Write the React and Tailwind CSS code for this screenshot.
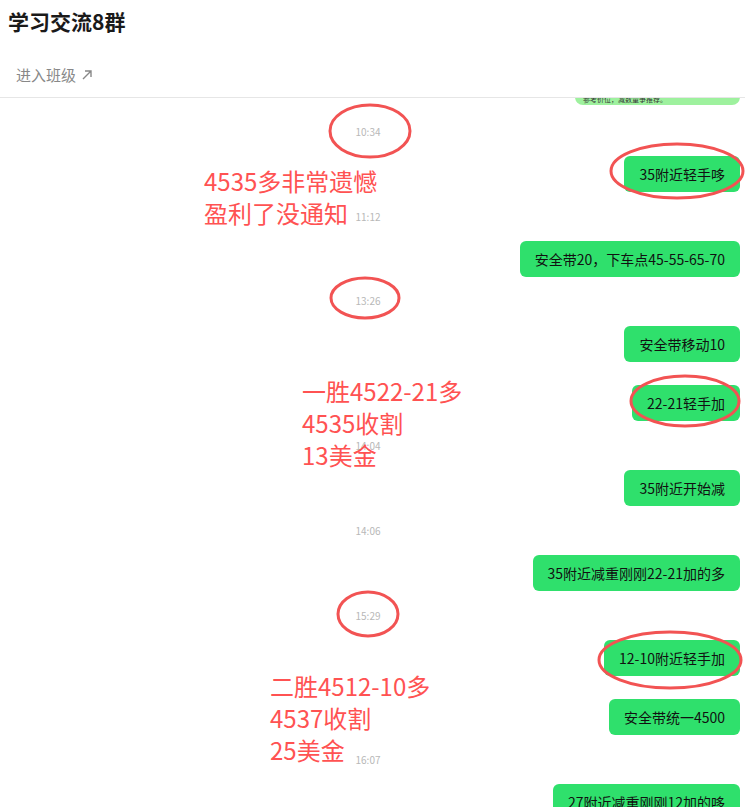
import React from 'react';

const font = { fontFamily: '"Noto Sans CJK SC", "Noto Sans", sans-serif' };

const Bubble = ({ children, className = '' }) => (
  <div className={`flex justify-end pr-[5px] ${className}`}>
    <div className="h-9 rounded-md bg-[#2fe06c] px-[15px] flex items-center text-[14px] text-[#111] whitespace-nowrap">
      {children}
    </div>
  </div>
);

const Time = ({ children, className = '' }) => (
  <div className={`h-[14px] flex items-center justify-center pr-[9px] text-[10px] text-[#b8b8b8] ${className}`}>
    {children}
  </div>
);

const Note = ({ lines, className }) => (
  <div className={`absolute text-[24px] text-[#ff5252] ${className}`}>
    {lines.map((l) => (
      <div key={l} className="h-8 flex items-center whitespace-nowrap">{l}</div>
    ))}
  </div>
);

const App = () => {
  return (
    <div className="relative w-[745px] h-[807px] overflow-hidden bg-white flex flex-col" style={font}>
      <header className="h-[98px] shrink-0 border-b border-[#e6e6e6] flex flex-col">
        <h1 className="h-[44px] pl-2 flex items-center text-[21px] font-bold text-[#1a1a1a]">学习交流8群</h1>
        <div className="mt-[20px] pl-4 flex items-center gap-1 text-[15px] text-[#888]">
          <span>进入班级</span>
          <svg width="14" height="14" viewBox="0 0 14 14" fill="none" stroke="#888" strokeWidth="1.4">
            <path d="M3 11 L11 3 M5 3 H11 V9" />
          </svg>
        </div>
      </header>

      <div className="flex-1 overflow-hidden">
        <div className="flex flex-col">
          <div className="flex justify-end pr-[5px] -mt-[29px]">
            <div className="h-9 rounded-lg bg-[#9ef19e] px-2 w-[165px] flex items-end pb-[1px] text-[7px] text-[#333]">
              参考价位，减数量争推荐。
            </div>
          </div>
          <Time className="mt-[19px]">10:34</Time>
          <Bubble className="mt-[18px]">35附近轻手哆</Bubble>
          <Time className="mt-[17px]">11:12</Time>
          <Bubble className="mt-[18px]">安全带20，下车点45-55-65-70</Bubble>
          <Time className="mt-[16px]">13:26</Time>
          <Bubble className="mt-[19px]">安全带移动10</Bubble>
          <Bubble className="mt-[23px]">22-21轻手加</Bubble>
          <Time className="mt-[17px]">14:04</Time>
          <Bubble className="mt-[18px]">35附近开始减</Bubble>
          <Time className="mt-[17px]">14:06</Time>
          <Bubble className="mt-[18px]">35附近减重刚刚22-21加的多</Bubble>
          <Time className="mt-[17px]">15:29</Time>
          <Bubble className="mt-[18px]">12-10附近轻手加</Bubble>
          <Bubble className="mt-[23px]">安全带统一4500</Bubble>
          <Time className="mt-[17px]">16:07</Time>
          <Bubble className="mt-[18px]">27附近减重刚刚12加的哆</Bubble>
        </div>
      </div>

      {/* hand-drawn annotations */}
      <svg className="absolute inset-0 pointer-events-none" width="745" height="807" fill="none" stroke="#f25353" strokeWidth="3">
        <ellipse cx="370" cy="131" rx="40" ry="26" />
        <ellipse cx="677" cy="171" rx="66" ry="27" />
        <ellipse cx="365" cy="298" rx="34" ry="20" />
        <ellipse cx="685" cy="401" rx="54" ry="25" />
        <ellipse cx="368" cy="614" rx="30" ry="22" />
        <ellipse cx="670" cy="660" rx="71" ry="28" />
      </svg>
      <Note className="left-[204px] top-[165px]" lines={['4535多非常遗憾', '盈利了没通知']} />
      <Note className="left-[302px] top-[375px]" lines={['一胜4522-21多', '4535收割', '13美金']} />
      <Note className="left-[270px] top-[670px]" lines={['二胜4512-10多', '4537收割', '25美金']} />
    </div>
  );
};

export default App;
